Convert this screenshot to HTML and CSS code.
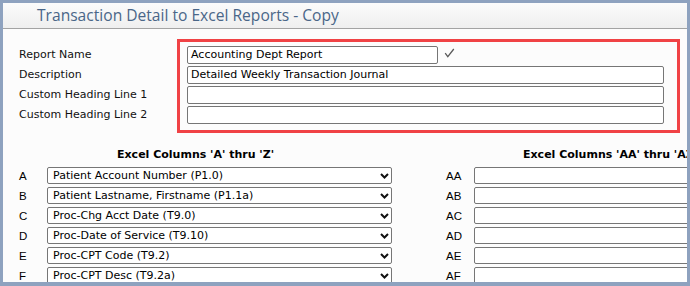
FILE: index.html
```html
<!DOCTYPE html>
<html>
<head>
<meta charset="utf-8">
<link rel="stylesheet" href="styles.css">
</head>
<body>
<div class="window">
  <div class="titlebar"><span class="title">Transaction Detail to Excel Reports - Copy</span></div>
  <div class="content">
    <div class="form">
      <div class="labels">
        <div class="label">Report Name</div>
        <div class="label">Description</div>
        <div class="label">Custom Heading Line 1</div>
        <div class="label">Custom Heading Line 2</div>
      </div>
      <div class="redbox">
        <div class="inrow">
          <div class="field field-name">Accounting Dept Report</div>
          <svg class="check" width="11" height="10" viewBox="0 0 11 10"><path d="M1.2 5.2 L3.8 8.6 L9.8 1" fill="none" stroke="#5a5a5a" stroke-width="1.3"/></svg>
        </div>
        <div class="field field-wide">Detailed Weekly Transaction Journal</div>
        <div class="field field-wide"></div>
        <div class="field field-wide"></div>
      </div>
    </div>
    <div class="columns">
      <div class="group group-left">
        <div class="group-head">Excel Columns 'A' thru 'Z'</div>
        <div class="row"><span class="letter">A</span><div class="select"><span class="sel-text">Patient Account Number (P1.0)</span><svg class="chev" width="9" height="6" viewBox="0 0 9 6"><path d="M1 1 L4.5 4.5 L8 1" fill="none" stroke="#111" stroke-width="2"/></svg></div></div>
        <div class="row"><span class="letter">B</span><div class="select"><span class="sel-text">Patient Lastname, Firstname (P1.1a)</span><svg class="chev" width="9" height="6" viewBox="0 0 9 6"><path d="M1 1 L4.5 4.5 L8 1" fill="none" stroke="#111" stroke-width="2"/></svg></div></div>
        <div class="row"><span class="letter">C</span><div class="select"><span class="sel-text">Proc-Chg Acct Date (T9.0)</span><svg class="chev" width="9" height="6" viewBox="0 0 9 6"><path d="M1 1 L4.5 4.5 L8 1" fill="none" stroke="#111" stroke-width="2"/></svg></div></div>
        <div class="row"><span class="letter">D</span><div class="select"><span class="sel-text">Proc-Date of Service (T9.10)</span><svg class="chev" width="9" height="6" viewBox="0 0 9 6"><path d="M1 1 L4.5 4.5 L8 1" fill="none" stroke="#111" stroke-width="2"/></svg></div></div>
        <div class="row"><span class="letter">E</span><div class="select"><span class="sel-text">Proc-CPT Code (T9.2)</span><svg class="chev" width="9" height="6" viewBox="0 0 9 6"><path d="M1 1 L4.5 4.5 L8 1" fill="none" stroke="#111" stroke-width="2"/></svg></div></div>
        <div class="row"><span class="letter">F</span><div class="select"><span class="sel-text">Proc-CPT Desc (T9.2a)</span><svg class="chev" width="9" height="6" viewBox="0 0 9 6"><path d="M1 1 L4.5 4.5 L8 1" fill="none" stroke="#111" stroke-width="2"/></svg></div></div>
      </div>
      <div class="group group-right">
        <div class="group-head">Excel Columns 'AA' thru 'AZ'</div>
        <div class="row"><span class="letter">AA</span><div class="tinput"></div></div>
        <div class="row"><span class="letter">AB</span><div class="tinput"></div></div>
        <div class="row"><span class="letter">AC</span><div class="tinput"></div></div>
        <div class="row"><span class="letter">AD</span><div class="tinput"></div></div>
        <div class="row"><span class="letter">AE</span><div class="tinput"></div></div>
        <div class="row"><span class="letter">AF</span><div class="tinput"></div></div>
      </div>
    </div>
  </div>
</div>
</body>
</html>
```
FILE: styles.css
```css
html, body {
  margin: 0;
  padding: 0;
  background: #fcfcfc;
}
.window {
  width: 690px;
  height: 286px;
  box-sizing: border-box;
  border: 3px solid #8ea2bf;
  border-bottom-width: 4px;
  overflow: hidden;
  background: #fcfcfc;
  font-family: "DejaVu Sans", Verdana, sans-serif;
  font-size: 11px;
  color: #111;
}
.titlebar {
  height: 25px;
  border-bottom: 1px solid #a3a3a3;
  background: linear-gradient(#fbfbfb, #efefef);
  padding-left: 34px;
}
.title {
  font-family: "Open Sans", "Noto Sans", sans-serif;
  font-size: 15.6px;
  line-height: 25px;
  color: #4a6688;
  white-space: nowrap;
}
.content {
  padding-left: 16px;
}
.form {
  display: flex;
  margin-top: 10px;
}
.labels {
  width: 158px;
  padding-top: 6px;
}
.label {
  height: 20px;
  line-height: 20px;
  white-space: nowrap;
}
.redbox {
  width: 503px;
  box-sizing: border-box;
  border: 3px solid #f04245;
  padding: 4px 13px 6px 7px;
  display: flex;
  flex-direction: column;
  gap: 2px;
}
.inrow {
  display: flex;
  align-items: center;
}
.field {
  height: 18px;
  box-sizing: border-box;
  border: 1px solid #767676;
  border-radius: 2px;
  background: #fff;
  padding-left: 3px;
  line-height: 16px;
  color: #000;
  white-space: nowrap;
}
.field-name {
  width: 251px;
}
.field-wide {
  width: 477px;
}
.check {
  margin-left: 6px;
  margin-top: -4px;
}
.columns {
  display: flex;
  width: 1000px;
}
.group-left {
  width: 427px;
  flex: none;
}
.group-right {
  flex: none;
  width: 500px;
}
.group-head {
  margin-top: 12px;
  height: 20px;
  line-height: 20px;
  margin-bottom: 2px;
  font-weight: bold;
  color: #000;
  white-space: nowrap;
}
.group-left .group-head {
  padding-left: 98px;
}
.group-right .group-head {
  padding-left: 77px;
}
.row {
  display: flex;
  align-items: center;
  height: 17px;
  margin-bottom: 3px;
}
.letter {
  width: 28px;
  flex: none;
  font-family: "Liberation Sans", Arial, sans-serif;
  font-size: 11.5px;
  color: #000;
}
.select {
  width: 345px;
  height: 17px;
  box-sizing: border-box;
  border: 1px solid #767676;
  border-radius: 2px;
  background: #fff;
  padding-left: 5px;
  padding-right: 2px;
  display: flex;
  align-items: center;
  justify-content: space-between;
  color: #000;
}
.sel-text {
  white-space: nowrap;
  line-height: 15px;
}
.tinput {
  width: 400px;
  height: 17px;
  box-sizing: border-box;
  border: 1px solid #767676;
  border-radius: 2px;
  background: #fff;
}
```
